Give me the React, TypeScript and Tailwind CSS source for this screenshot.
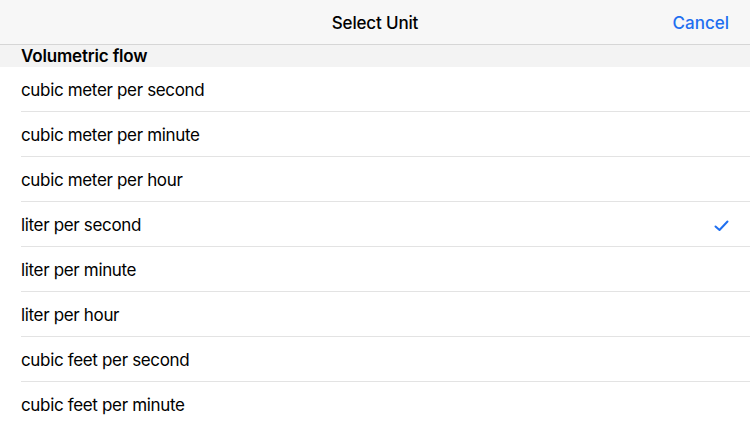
const units = [
  "cubic meter per second",
  "cubic meter per minute",
  "cubic meter per hour",
  "liter per second",
  "liter per minute",
  "liter per hour",
  "cubic feet per second",
  "cubic feet per minute",
];

const selected = "liter per second";

export default function App() {
  return (
    <div className="h-[422px] w-[750px] overflow-hidden bg-white font-['Inter',sans-serif] text-black">
      <header className="relative flex h-[45px] items-center justify-center border-b border-[#d6d6d6] bg-[#f7f7f7] pt-[3px]">
        <h1 className="text-[17px] font-medium tracking-[-0.01em]">Select Unit</h1>
        <button className="absolute right-[21px] top-0 flex h-full items-center pt-[3px] text-[17px] font-medium text-[#1f6ff0]">
          Cancel
        </button>
      </header>
      <div className="flex h-[22px] items-center bg-[#f3f3f3] pl-[21px] pt-[1px]">
        <span className="text-[17px] font-semibold tracking-[-0.01em]">Volumetric flow</span>
      </div>
      <ul>
        {units.map((unit, i) => (
          <li key={unit} className="pl-[21px]">
            <div
              className={
                i < units.length - 1
                  ? "flex h-[45px] items-center justify-between border-b border-[#e3e3e3] pr-[21px] pt-[3px]"
                  : "flex h-[45px] items-center justify-between pr-[21px] pt-[3px]"
              }
            >
              <span className="text-[17px] tracking-[-0.02em]">{unit}</span>
              {unit === selected && (
                <svg width="15" height="12" viewBox="0 0 15 12" fill="none">
                  <path
                    d="M1.5 6.5 L5.5 10 L13.5 1.5"
                    stroke="#1f6ff0"
                    strokeWidth="2"
                    strokeLinecap="round"
                    strokeLinejoin="round"
                  />
                </svg>
              )}
            </div>
          </li>
        ))}
      </ul>
    </div>
  );
}
